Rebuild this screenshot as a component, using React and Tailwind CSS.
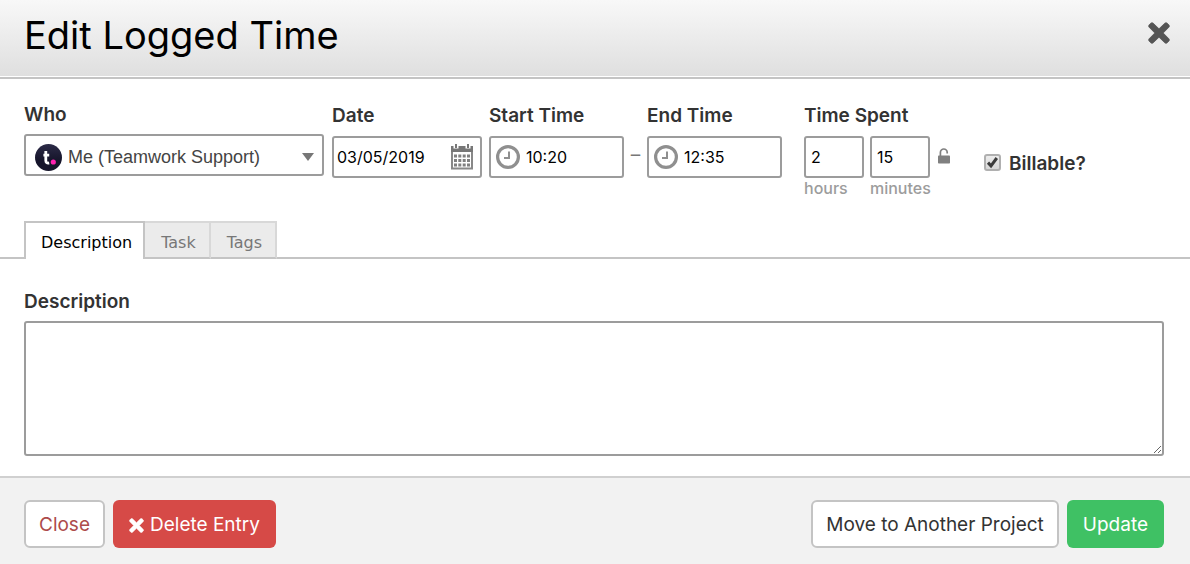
import React, { useState } from 'react';

const TABS = ['Description', 'Task', 'Tags'];

const CrossIcon = ({ className }) => (
  <svg viewBox="0 0 22 22" className={className} aria-hidden="true">
    <path
      d="M5.2 1.2 11 6.8 16.8 1.2Q18 .2 19.2 1.2L20.9 2.9Q21.9 4 20.9 5.2L15.2 11 20.9 16.8Q21.9 18 20.9 19.1L19.2 20.8Q18 21.8 16.8 20.8L11 15.2 5.2 20.8Q4 21.8 2.8 20.8L1.1 19.1Q.1 18 1.1 16.8L6.8 11 1.1 5.2Q.1 4 1.1 2.9L2.8 1.2Q4 .2 5.2 1.2Z"
      fill="currentColor"
      stroke="currentColor"
      strokeWidth="0.8"
      strokeLinejoin="round"
    />
  </svg>
);

const Avatar = () => (
  <svg viewBox="0 0 27 27" className="h-[27px] w-[27px] shrink-0" aria-hidden="true">
    <defs>
      <linearGradient id="avatar-fill" x1="0" y1="0" x2="0" y2="1">
        <stop offset="0" stopColor="#2c2b47" />
        <stop offset="0.6" stopColor="#16152b" />
      </linearGradient>
    </defs>
    <circle cx="13.5" cy="13.5" r="13.5" fill="url(#avatar-fill)" />
    <path d="M10.8 7V16.6q0 3 3.4 2.4M8.4 11.2h5.8" fill="none" stroke="#fff" strokeWidth="2.8" />
    <circle cx="18.3" cy="18" r="2.6" fill="#ff22b1" />
  </svg>
);

const CalendarIcon = () => (
  <svg viewBox="0 0 24 26" className="h-[26px] w-6 shrink-0" aria-hidden="true">
    <path d="M1 2h22v6H1z" fill="#777" />
    <path d="M3.5 0h5v4.5h-5zM15.5 0h5v4.5h-5z" fill="#fff" />
    <path d="M5 0h2v4H5zM17 0h2v4h-2z" fill="#777" />
    <path d="M2 8v16.5h20V8" fill="#fff" stroke="#888" strokeWidth="2" />
    <path
      d="M4 10.5h3v3H4zM8.3 10.5h3v3h-3zM12.7 10.5h3v3h-3zM17 10.5h3v3h-3zM4 15h3v3H4zM8.3 15h3v3h-3zM12.7 15h3v3h-3zM17 15h3v3h-3zM4 19.5h3v3H4zM8.3 19.5h3v3h-3zM12.7 19.5h3v3h-3zM17 19.5h3v3h-3z"
      fill="#808080"
    />
  </svg>
);

const ClockIcon = () => (
  <svg viewBox="0 0 24 24" className="h-6 w-6 shrink-0" fill="none" stroke="#8f8f8f" aria-hidden="true">
    <circle cx="12" cy="12" r="10.4" strokeWidth="3.2" />
    <path d="M13 6.5V13H8" strokeWidth="2" />
  </svg>
);

const LockIcon = () => (
  <svg viewBox="0 0 12 16" className="h-4 w-3" aria-hidden="true">
    <path d="M2.4 9V4.4a3.4 3.4 0 0 1 6.8 0V5.4" fill="none" stroke="#808080" strokeWidth="1.7" />
    <rect y="7.5" width="12" height="8" rx="0.8" fill="#808080" />
  </svg>
);

const TimeField = ({ id, label, value, onChange }) => (
  <div className="flex flex-col gap-1.5">
    <label htmlFor={id} className="leading-7">{label}</label>
    <div className="flex h-[42px] w-[135px] items-center gap-1.5 rounded-[3px] border-2 border-[#9c9c9c] pl-[5px]">
      <ClockIcon />
      <input
        id={id}
        value={value}
        onChange={(e) => onChange(e.target.value)}
        className="w-full min-w-0 text-base font-normal text-black outline-none"
      />
    </div>
  </div>
);

const App = () => {
  const [tab, setTab] = useState('Description');
  const [date, setDate] = useState('03/05/2019');
  const [start, setStart] = useState('10:20');
  const [end, setEnd] = useState('12:35');
  const [hours, setHours] = useState('2');
  const [minutes, setMinutes] = useState('15');
  const [billable, setBillable] = useState(true);
  const [description, setDescription] = useState('');

  return (
    <div className="flex min-h-screen flex-col bg-white font-['Inter',sans-serif] text-[19px] text-[#333]">
      <header className="border-b-2 border-[#c4c4c4] bg-white pb-px">
        <div className="flex h-[76px] items-start justify-between bg-linear-to-b from-[#f8f8f8] to-[#dfdfdf] pr-5 pl-6">
          <h1 className="pt-2.5 text-[38px] leading-[50px] font-normal text-black">Edit Logged Time</h1>
          <button type="button" aria-label="Close dialog" className="mt-[22px] text-[#555]">
            <CrossIcon className="h-[22px] w-[22px]" />
          </button>
        </div>
      </header>

      <form className="flex grow flex-col" onSubmit={(e) => e.preventDefault()}>
        <div className="flex items-start px-6 pt-[23px] font-semibold">
          <div className="mr-2 flex w-[300px] flex-col gap-1.5">
            <label htmlFor="who" className="leading-[26px]">Who</label>
            <div className="flex h-[42px] items-center gap-1.5 rounded-[3px] border-2 border-[#9c9c9c] pt-1 pr-2 pl-[9px]">
              <Avatar />
              <select
                id="who"
                className="min-w-0 grow appearance-none font-['Liberation_Sans',sans-serif] text-lg font-normal text-[#444] outline-none"
              >
                <option>Me (Teamwork Support)</option>
              </select>
              <svg viewBox="0 0 12 8" className="h-2 w-3 shrink-0" aria-hidden="true">
                <path d="M0 0h12L6 8Z" fill="#777" />
              </svg>
            </div>
          </div>

          <div className="mr-[7px] flex w-[150px] flex-col gap-1.5">
            <label htmlFor="date" className="leading-7">Date</label>
            <div className="flex h-[42px] items-center rounded-[3px] border-2 border-[#9c9c9c] pr-1.5 pl-[3px]">
              <input
                id="date"
                value={date}
                onChange={(e) => setDate(e.target.value)}
                className="min-w-0 grow text-base font-normal text-black outline-none"
              />
              <CalendarIcon />
            </div>
          </div>

          <TimeField id="start" label="Start Time" value={start} onChange={setStart} />
          <span className="mt-8 w-[23px] text-center leading-[42px] font-normal text-[#777]">–</span>
          <TimeField id="end" label="End Time" value={end} onChange={setEnd} />

          <fieldset className="ml-[22px]">
            <legend className="mb-1.5 leading-7">Time Spent</legend>
            <div className="flex items-start gap-1.5">
              <div className="flex w-[60px] flex-col">
                <input
                  id="hours"
                  value={hours}
                  onChange={(e) => setHours(e.target.value)}
                  className="h-[42px] w-full rounded-[3px] border-2 border-[#9c9c9c] px-[5px] text-base font-normal text-black outline-none"
                />
                <label htmlFor="hours" className="text-base leading-5 font-medium text-[#9c9c9c]">hours</label>
              </div>
              <div className="flex w-[60px] flex-col">
                <input
                  id="minutes"
                  value={minutes}
                  onChange={(e) => setMinutes(e.target.value)}
                  className="h-[42px] w-full rounded-[3px] border-2 border-[#9c9c9c] px-[5px] text-base font-normal text-black outline-none"
                />
                <label htmlFor="minutes" className="text-base leading-5 font-medium text-[#9c9c9c]">minutes</label>
              </div>
              <button type="button" aria-label="Lock time" className="mt-3 ml-0.5">
                <LockIcon />
              </button>
            </div>
          </fieldset>

          <label className="mt-12 ml-[34px] flex items-center gap-2 leading-7">
            <span className="grid pb-1">
              <input
                type="checkbox"
                checked={billable}
                onChange={(e) => setBillable(e.target.checked)}
                className="peer col-start-1 row-start-1 h-[17px] w-[17px] appearance-none rounded-[3px] border-2 border-[#b0b0b0] bg-linear-to-b from-[#ececec] to-[#d8d8d8]"
              />
              <svg viewBox="0 0 17 17" className="pointer-events-none invisible col-start-1 row-start-1 h-[17px] w-[17px] peer-checked:visible" aria-hidden="true">
                <path d="m4 8.6 3 3.2L12.8 4" fill="none" stroke="#3c3c3c" strokeWidth="3" />
              </svg>
            </span>
            Billable?
          </label>
        </div>

        <div role="tablist" className="mt-[23px] flex h-[38px] font-['DejaVu_Sans',sans-serif] text-base">
          <span className="w-6 border-b-2 border-[#c4c4c4]" />
          {TABS.map((name) => (
            <button
              key={name}
              type="button"
              role="tab"
              aria-selected={tab === name}
              onClick={() => setTab(name)}
              className={
                tab === name
                  ? 'border-x-2 border-t-2 border-[#c4c4c4] bg-white pt-1 pr-[11px] pl-[15px] text-black'
                  : 'border-t-2 border-r-2 border-b-2 border-t-[#d8d8d8] border-r-[#d8d8d8] border-b-[#c4c4c4] bg-[#ebebeb] pt-1.5 pr-[13px] pl-4 text-[#777]'
              }
            >
              {name}
            </button>
          ))}
          <span className="grow border-b-2 border-[#c4c4c4]" />
        </div>

        <div className="flex grow flex-col pt-[29px] pr-[26px] pb-5 pl-6">
          <label htmlFor="description" className="mb-[5px] leading-7 font-semibold">Description</label>
          <textarea
            id="description"
            value={description}
            onChange={(e) => setDescription(e.target.value)}
            className="min-h-[135px] w-full grow rounded-[3px] border-2 border-[#9c9c9c] p-2 text-base outline-none"
          />
        </div>

        <footer className="flex gap-2 border-t-2 border-[#d0d0d0] bg-[#f2f2f2] pt-[22px] pr-[26px] pb-4 pl-6">
          <button type="button" className="h-12 rounded-md border-2 border-[#c4c4c4] bg-white px-[13px] pt-0.5 text-[#ad4b4b]">Close</button>
          <button type="button" className="flex h-12 items-center gap-1.5 rounded-md bg-[#d64a47] px-4 pt-0.5 text-white">
            <CrossIcon className="h-[15px] w-[15px]" />
            Delete Entry
          </button>
          <button type="button" className="ml-auto h-12 rounded-md border-2 border-[#c4c4c4] bg-white px-[13px] pt-0.5 text-[#333]">Move to Another Project</button>
          <button type="submit" className="h-12 rounded-md bg-[#3fc164] px-4 pt-0.5 text-white">Update</button>
        </footer>
      </form>
    </div>
  );
};

export default App;
